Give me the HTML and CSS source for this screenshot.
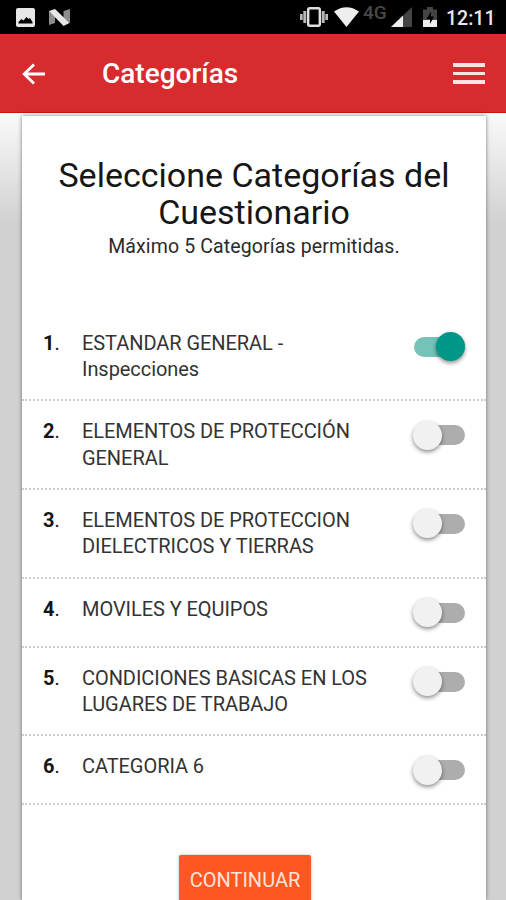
FILE: index.html
```html
<!DOCTYPE html>
<html lang="es">
<head>
  <meta charset="UTF-8">
  <meta name="viewport" content="width=device-width, initial-scale=1.0">
  <title>Categorías</title>
  <link rel="stylesheet" href="styles.css">
</head>
<body>
  <div class="status-bar">
    <svg class="icon-image" width="19" height="19" viewBox="0 0 19 19">
      <rect width="19" height="19" rx="2" fill="#e6e6e6"/>
      <path d="M2.500 15.500V14l3-3 2 1.500L10.500 9l2 2 1.500-1 2.500 4v1.500z" fill="#000"/>
    </svg>
    <svg class="icon-n" width="21" height="17" viewBox="0 0 21 17">
      <path d="M0 2 6 7v7l-6 2zM14.500 2 21 0v14l-6.500-5z" fill="#8c8c8c"/>
      <path d="M0 2 6 0l14.500 14-6 3z" fill="#e6e6e6"/>
    </svg>
    <span class="spacer"></span>
    <svg class="icon-vibrate" width="28" height="20" viewBox="0 0 28 20">
      <path d="M1.200 7v6M4.800 4v12M26.800 7v6M23.200 4v12" stroke="#b8b8b8" stroke-width="3"/>
      <rect x="8.200" y="1.200" width="11.600" height="17.600" rx="1.500" fill="#000" stroke="#e0e0e0" stroke-width="2.400"/>
    </svg>
    <svg class="icon-wifi" width="25" height="20" viewBox="0 0 25 20">
      <path d="M0 4.500Q12.500-4 25 4.500L12.500 20z" fill="#eee"/>
    </svg>
    <span class="network">4G</span>
    <svg class="icon-signal" width="21" height="20" viewBox="0 0 21 20">
      <path d="M0 20 21 0v20z" fill="#444"/>
      <path d="M0 20 12 8.500V20z" fill="#eee"/>
    </svg>
    <svg class="icon-battery" width="14" height="20" viewBox="0 0 14 20">
      <path d="M0 2.500h4V0h6v2.500h4V20H0z" fill="#444"/>
      <path d="M0 13h14v7H0z" fill="#eee"/>
      <path d="M8 4.500 3.500 12H7v5l4-7.500H8z" fill="#000"/>
    </svg>
    <span class="clock">12:11</span>
  </div>

  <header class="toolbar">
    <svg class="back" width="24" height="24" viewBox="0 0 24 24">
      <path d="M23 12H2.500M12 2.500 2.200 12l9.800 9.500" fill="none" stroke="#fff" stroke-width="2.800"/>
    </svg>
    <h1 class="toolbar-title">Categorías</h1>
    <div class="menu">
      <span></span>
      <span></span>
      <span></span>
    </div>
  </header>

  <main class="page">
    <div class="card">
      <h2 class="title">Seleccione Categorías del Cuestionario</h2>
      <p class="subtitle">Máximo 5 Categorías permitidas.</p>

      <div class="list">
        <div class="item">
          <span class="num"><b>1</b>.</span>
          <span class="label">ESTANDAR GENERAL -<br>Inspecciones</span>
          <span class="switch on"></span>
        </div>
        <div class="item">
          <span class="num"><b>2</b>.</span>
          <span class="label">ELEMENTOS DE PROTECCIÓN<br>GENERAL</span>
          <span class="switch"></span>
        </div>
        <div class="item">
          <span class="num"><b>3</b>.</span>
          <span class="label">ELEMENTOS DE PROTECCION<br>DIELECTRICOS Y TIERRAS</span>
          <span class="switch"></span>
        </div>
        <div class="item">
          <span class="num"><b>4</b>.</span>
          <span class="label">MOVILES Y EQUIPOS</span>
          <span class="switch"></span>
        </div>
        <div class="item">
          <span class="num"><b>5</b>.</span>
          <span class="label">CONDICIONES BASICAS EN LOS<br>LUGARES DE TRABAJO</span>
          <span class="switch"></span>
        </div>
        <div class="item">
          <span class="num"><b>6</b>.</span>
          <span class="label">CATEGORIA 6</span>
          <span class="switch"></span>
        </div>
      </div>

      <button class="continue">CONTINUAR</button>
    </div>
  </main>
</body>
</html>
```

FILE: styles.css
```css
* {
  box-sizing: border-box;
}
body {
  margin: 0;
  height: 900px;
  overflow: hidden;
  display: flex;
  flex-direction: column;
  font-family: Roboto, "Liberation Sans", sans-serif;
  color: #161616;
  background: #d1d1d1;
}

/* status bar */
.status-bar {
  flex: none;
  display: flex;
  align-items: flex-start;
  height: 34px;
  padding: 7px 11px 0 16px;
  background: #000;
}
.icon-image {
  margin-top: 1px;
}
.icon-n {
  margin: 2px 0 0 14px;
}
.spacer {
  flex: 1;
}
.icon-wifi {
  margin-left: 6px;
}
.network {
  margin-left: 4px;
  font-size: 19px;
  line-height: 12px;
  font-weight: 500;
  color: #484848;
  width: 24px;
}
.icon-signal {
  margin-left: 4px;
}
.icon-battery {
  margin-left: 11px;
}
.clock {
  width: 49px;
  margin-left: 9px;
  font-size: 19.500px;
  line-height: 23px;
  font-weight: 500;
  color: #e8e8e8;
  white-space: nowrap;
}

/* toolbar */
.toolbar {
  flex: none;
  display: flex;
  align-items: center;
  height: 79px;
  padding: 1px 21px 0 22px;
  background: #d72b2d;
  border-bottom: 1px solid #c9120f;
}
.toolbar-title {
  flex: 1;
  margin: 1px 0 0 56px;
  font-size: 28px;
  line-height: 36px;
  font-weight: 500;
  color: #fff;
}
.menu {
  display: flex;
  flex-direction: column;
  gap: 5px;
  width: 32px;
}
.menu span {
  height: 3.500px;
  background: #ffe3e1;
}

/* content */
.page {
  flex: 1;
  min-height: 0;
  padding: 3px 20px 0 22px;
  background: linear-gradient(#fafafa, #d1d1d1 110px);
}
.card {
  height: 100%;
  padding-top: 41px;
  background: #fff;
  box-shadow: 0 0 4px rgba(0, 0, 0, 0.5);
  text-align: center;
}
.title {
  margin: 0 auto;
  width: 410px;
  font-size: 34px;
  line-height: 37px;
  font-weight: 400;
}
.subtitle {
  margin: 0;
  font-size: 19.500px;
  line-height: 32px;
  letter-spacing: 0.130px;
  color: #2a2a2a;
}

.list {
  margin-top: 49.500px;
  text-align: left;
}
.item {
  display: flex;
  align-items: flex-start;
  min-height: 69px;
  padding: 17px 21px 16.500px;
  border-bottom: 2px dotted #ccc;
  font-size: 20px;
  line-height: 26.600px;
}
.num {
  width: 39px;
}
.num b {
  font-weight: 700;
}
.label {
  flex: 1;
  color: #333;
  letter-spacing: -0.060px;
  white-space: nowrap;
}

.switch {
  display: flex;
  align-items: center;
  width: 51px;
  height: 20px;
  margin-top: 7px;
  border-radius: 10px;
  background: #adadad;
}
.switch::before {
  content: "";
  width: 29px;
  height: 29px;
  margin-left: -1px;
  border-radius: 50%;
  background: #f1f1f1;
  box-shadow: 0 2px 4px rgba(0, 0, 0, 0.45);
}
.switch.on {
  background: #75c2b9;
}
.switch.on::before {
  margin-left: 22px;
  background: #009688;
}

.continue {
  width: 132px;
  height: 50px;
  margin: 50px 18px 0 0;
  padding: 0;
  border: 0;
  border-radius: 2px;
  background: #ff5722;
  box-shadow: 0 0 3px rgba(0, 0, 0, 0.3);
  color: #ffe3da;
  font-family: inherit;
  font-size: 20px;
}
```
